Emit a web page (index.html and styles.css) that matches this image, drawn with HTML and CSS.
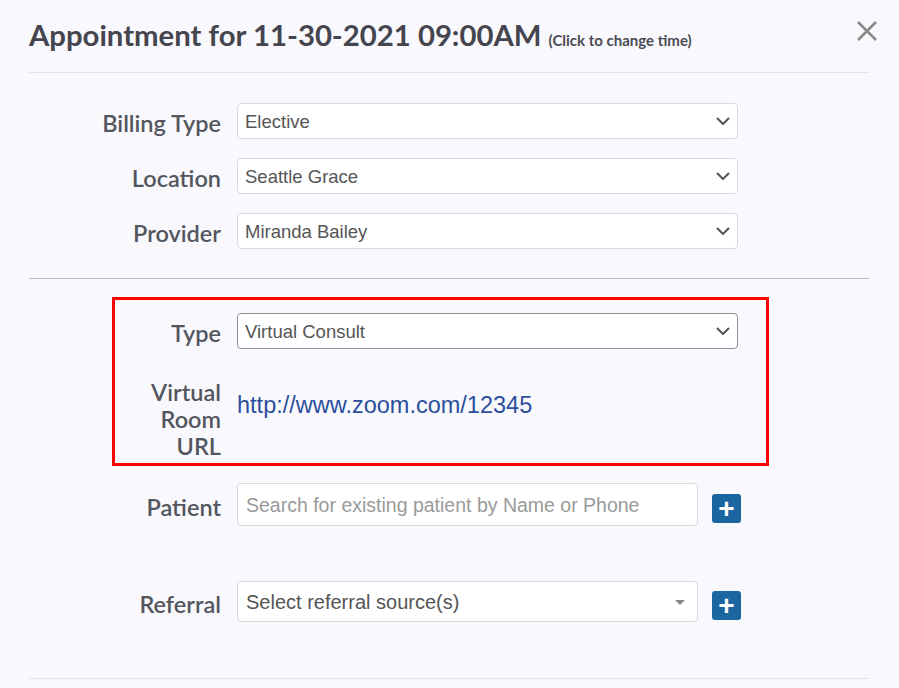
FILE: index.html
```html
<!DOCTYPE html>
<html lang="en">
<head>
    <meta charset="UTF-8">
    <meta name="viewport" content="width=device-width, initial-scale=1.0">
    <title>Appointment</title>
    <link rel="stylesheet" href="styles.css">
</head>
<body>
    <div class="modal">
        <!-- header -->
        <div class="modal-header">
            <h1 class="modal-title">Appointment for 11-30-2021 09:00AM <span class="title-hint">(Click to change time)</span></h1>
            <button class="close-button" aria-label="Close">
                <svg width="20" height="20" viewBox="0 0 20 20">
                    <path d="M1 1 L19 19 M19 1 L1 19" stroke="#8a8a8a" stroke-width="2.6" fill="none"/>
                </svg>
            </button>
        </div>

        <!-- billing / location / provider -->
        <div class="section">
            <div class="row">
                <label class="row-label">Billing Type</label>
                <div class="select">
                    <span>Elective</span>
                    <svg class="chevron" width="14" height="8" viewBox="0 0 14 8"><path d="M1 1 L7 7 L13 1" stroke="#555" stroke-width="2" fill="none"/></svg>
                </div>
            </div>
            <div class="row">
                <label class="row-label">Location</label>
                <div class="select">
                    <span>Seattle Grace</span>
                    <svg class="chevron" width="14" height="8" viewBox="0 0 14 8"><path d="M1 1 L7 7 L13 1" stroke="#555" stroke-width="2" fill="none"/></svg>
                </div>
            </div>
            <div class="row">
                <label class="row-label">Provider</label>
                <div class="select">
                    <span>Miranda Bailey</span>
                    <svg class="chevron" width="14" height="8" viewBox="0 0 14 8"><path d="M1 1 L7 7 L13 1" stroke="#555" stroke-width="2" fill="none"/></svg>
                </div>
            </div>
        </div>

        <hr class="divider">

        <!-- highlighted virtual consult group -->
        <div class="highlight">
            <div class="row">
                <label class="row-label">Type</label>
                <div class="select select-focus">
                    <span>Virtual Consult</span>
                    <svg class="chevron" width="14" height="8" viewBox="0 0 14 8"><path d="M1 1 L7 7 L13 1" stroke="#555" stroke-width="2" fill="none"/></svg>
                </div>
            </div>
            <div class="row row-top">
                <label class="row-label multi">Virtual<br>Room<br>URL</label>
                <a class="room-link" href="#">http://www.zoom.com/12345</a>
            </div>
        </div>

        <!-- patient / referral -->
        <div class="row row-patient">
            <label class="row-label">Patient</label>
            <input class="text-input" type="text" placeholder="Search for existing patient by Name or Phone">
            <button class="add-button" aria-label="Add patient">+</button>
        </div>
        <div class="row row-referral">
            <label class="row-label">Referral</label>
            <div class="select select-short">
                <span>Select referral source(s)</span>
                <span class="caret"></span>
            </div>
            <button class="add-button" aria-label="Add referral">+</button>
        </div>

        <div class="footer-line"></div>
    </div>
</body>
</html>
```

FILE: styles.css
```css
/* base */
body {
    margin: 0;
    background-color: #f9f9fd;
    font-family: Lato, "Liberation Sans", Arial, sans-serif;
    color: #53565e;
}

.modal {
    padding: 0 30px 0 29px;
}

/* header */
.modal-header {
    display: flex;
    justify-content: space-between;
    align-items: flex-start;
    height: 72px;
    border-bottom: 1px solid #e3e3ea;
}

.modal-title {
    margin: 0;
    padding-top: 17px;
    font-size: 29.3px;
    line-height: 36px;
    font-weight: 700;
    color: #44454f;
}

.title-hint {
    font-size: 15px;
    font-weight: 700;
    color: #4a4b54;
}

.close-button {
    margin: 21px -8px 0 0;
    padding: 0;
    border: none;
    background: none;
    width: 20px;
    height: 20px;
    cursor: pointer;
}

.close-button svg {
    display: block;
}

/* form rows */
.section {
    display: flex;
    flex-direction: column;
    gap: 19px;
    padding: 30px 0 29px;
}

.row {
    display: flex;
    align-items: center;
}

.row-label {
    width: 192px;
    margin-right: 16px;
    padding-top: 4px;
    text-align: right;
    font-size: 23.5px;
    font-weight: 600;
    flex-shrink: 0;
}

.select {
    display: flex;
    align-items: center;
    justify-content: space-between;
    box-sizing: border-box;
    width: 501px;
    height: 36px;
    padding: 2px 7px 0 7px;
    background-color: #fff;
    border: 1px solid #d8d8e0;
    border-radius: 4px;
    font-family: "Liberation Sans", Arial, sans-serif;
    font-size: 18.5px;
    color: #555;
}

.select-focus {
    border-color: #8e8e98;
}

.chevron {
    display: block;
    margin-bottom: 2px;
}

.divider {
    margin: 0;
    border: none;
    border-top: 1px solid #bcbcc4;
}

/* red highlight group */
.highlight {
    margin: 18px 0 0 83px;
    width: 657px;
    box-sizing: border-box;
    border: 3px solid #ff0000;
    padding: 13px 0 3px;
}

.highlight .row-label {
    width: 106px;
}

.row-top {
    align-items: flex-start;
    margin-top: 30px;
}

.row-label.multi {
    padding-top: 0;
    line-height: 27px;
}

.room-link {
    margin-top: 13px;
    font-family: "Liberation Sans", Arial, sans-serif;
    font-size: 23.5px;
    line-height: 27px;
    color: #2b4f9d;
    text-decoration: none;
}

/* patient + referral */
.row-patient {
    margin-top: 17px;
}

.row-referral {
    margin-top: 55px;
}

.text-input {
    box-sizing: border-box;
    width: 461px;
    height: 43px;
    padding: 2px 8px 0;
    background-color: #fff;
    border: 1px solid #d8d8e0;
    border-radius: 4px;
    font-family: "Liberation Sans", Arial, sans-serif;
    font-size: 19.5px;
    color: #555;
    outline: none;
}

.text-input::placeholder {
    color: #9a9a9a;
}

.select-short {
    width: 461px;
    height: 41px;
    padding: 2px 12px 0 8px;
    font-size: 20px;
}

.caret {
    width: 0;
    height: 0;
    border-left: 5px solid transparent;
    border-right: 5px solid transparent;
    border-top: 5px solid #888;
}

.add-button {
    margin: 7px 0 0 14px;
    width: 29px;
    height: 29px;
    padding: 0;
    border: none;
    border-radius: 3px;
    background-color: #1b65a1;
    color: #fff;
    font-family: "Liberation Sans", Arial, sans-serif;
    font-size: 28px;
    font-weight: 700;
    line-height: 29px;
    cursor: pointer;
}

.footer-line {
    margin-top: 56px;
    border-top: 1px solid #e3e3ea;
}
```
